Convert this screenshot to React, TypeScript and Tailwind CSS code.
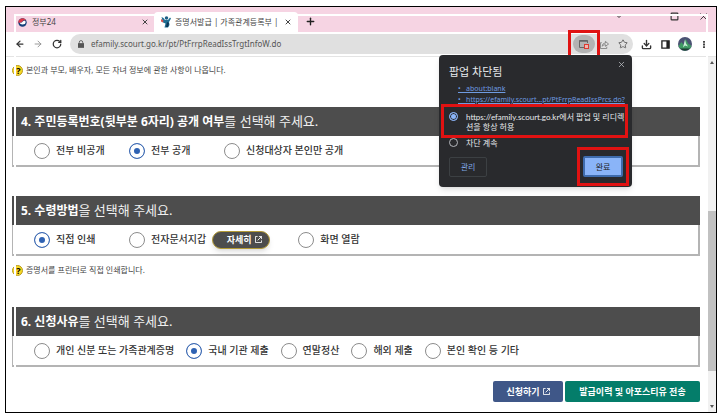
import React, { useState } from "react";
import {
  ArrowLeft,
  ArrowRight,
  ChevronDown,
  Download,
  Plus,
  RotateCw,
  Square,
  Star,
  X,
} from "lucide-react";

const GovLogo = () => (
  <svg viewBox="0 0 16 16" className="size-[9px] shrink-0" aria-hidden="true">
    <circle cx="8" cy="8" r="7.500" fill="#163f7a" />
    <path d="M.5 8a7.500 7.500 0 0 1 14-3.500C12 3 9 4 8 6S3 9.500.5 8z" fill="#d8374a" />
    <path d="M3 8.500C6 9 7.500 7 8.500 6S13 4 13.500 7 11 11.500 8 11.500 3.500 10 3 8.500z" fill="#fff" />
  </svg>
);

const CourtLogo = () => (
  <svg viewBox="0 0 20 24" className="h-[12px] w-[10px] shrink-0" aria-hidden="true">
    <circle cx="11" cy="4" r="3.500" fill="#1d5f86" />
    <path d="M1 2l4 2 3 4h6l4-5 2 2-4 7 1 6-3 5H7l2-8-5-2z" fill="#1f6f93" />
    <path d="M0 6l5 3-1 4-4-2z" fill="#d9534f" />
    <path d="M12 12l4 2-2 8h-4z" fill="#0c3556" />
  </svg>
);

const Avatar = () => (
  <svg viewBox="0 0 14 14" className="size-[14px]" aria-hidden="true">
    <circle cx="7" cy="7" r="7" fill="#4b5273" />
    <path d="M0.500 9l3-4 2 3 2-6 3 5 2 1 .8 1.500A7 7 0 0 1 1 10z" fill="#3f9a63" />
    <path d="M7 2.500l1 4 2 3-3-1-2 2 1-4z" fill="#c9efd6" />
    <path d="M2 11.500h10A7 7 0 0 1 2 11.500z" fill="#1f3d35" />
  </svg>
);

const LockIcon = () => (
  <svg viewBox="0 0 7 9" className="h-[8px] w-[6px] shrink-0" aria-hidden="true">
    <path d="M1.500 4V2.500a2 2 0 0 1 4 0V4" fill="none" stroke="#555" />
    <path d="M0 3.500h7V9H0z" fill="#555" />
  </svg>
);

const ShareIcon = () => (
  <svg viewBox="0 0 10 10" className="size-[9px] shrink-0" fill="none" stroke="#808080" aria-hidden="true">
    <path d="M2 3H.5v6.500h7V7.500" />
    <path d="M2.500 7C2.500 4.500 4 3.500 6 3.500V1.500L9.500 4.500 6 7V5.200C4.500 5.200 3.500 5.500 2.500 7z" />
  </svg>
);

const NewWindowIcon = () => (
  <svg viewBox="0 0 8 8" className="size-[7px] shrink-0" fill="none" stroke="currentColor" aria-hidden="true">
    <path d="M3 .5H.5v7h7V5" />
    <path d="M4.500.5h3v3M7.500.5L3 5" />
  </svg>
);

const HelpNote = ({ children }: { children: React.ReactNode }) => (
  <p className="flex h-[14px] items-center gap-[3px] text-[8px] whitespace-nowrap text-[#444]">
    <span className="flex size-[11px] shrink-0 items-center justify-center rounded-full border border-[#b89a20] bg-[#f8d824] pl-[2px] text-[9px] leading-none font-bold text-black">
      ?
    </span>
    {children}
  </p>
);

type SectionProps = {
  title: string;
  rest: string;
  children: React.ReactNode;
};

const Section = ({ title, rest, children }: SectionProps) => (
  <fieldset className="min-w-0">
    <legend className="flex h-[29px] w-full items-center bg-[#4d4d4d] pl-[9px] text-[13px] whitespace-nowrap text-[#f0f0f0]">
      <b className="text-[12px] text-white">{title}</b>
      {rest}
    </legend>
    <div className="flex h-[31px] items-center border-r-2 border-b-2 border-l border-[#b4b4b4] pl-[21px]">
      {children}
    </div>
  </fieldset>
);

type OptionProps = {
  name: string;
  label: string;
  value: string;
  onChange: (value: string) => void;
  className?: string;
};

const Option = ({ name, label, value, onChange, className = "" }: OptionProps) => (
  <label
    className={`flex shrink-0 items-center gap-[6px] text-[10px] font-medium whitespace-nowrap text-[#333] ${className}`}
  >
    <input
      type="radio"
      name={name}
      checked={value === label}
      onChange={() => onChange(label)}
      className="size-[16px] shrink-0 appearance-none rounded-full border border-[#8c8c8c] bg-white checked:border-[#3f6bb3] checked:bg-[#2f62b3] checked:shadow-[inset_0_0_0_4px_white]"
    />
    {label}
  </label>
);

const popupRadio =
  "size-[9px] shrink-0 appearance-none rounded-full border border-[#b5b8bd] checked:border-[#8ab4f8] checked:bg-[#8ab4f8] checked:shadow-[inset_0_0_0_1px_#292a2d]";

const PopupBlocked = () => {
  const [allow, setAllow] = useState(true);

  return (
    <div className="absolute top-[23px] right-[84px] z-20 h-[132px] w-[193px] rounded-[4px] bg-[#292a2d] font-[Lato,'Noto_Sans_CJK_KR',sans-serif] text-[#e8eaed] shadow-md">
      <button aria-label="닫기" className="absolute top-[5px] right-[6px] text-[#bdc1c6]">
        <X size={9} />
      </button>
      <h2 className="pt-[9px] pl-[10px] text-[11px] leading-[16px]">팝업 차단됨</h2>
      <ul className="pt-[3px] pl-[19px] font-['Noto_Sans',sans-serif] text-[7px] leading-[11px] whitespace-nowrap text-[#6f9be0] underline">
        <li>
          <a href="#blank">•&nbsp;&nbsp; about:blank</a>
        </li>
        <li>
          <a href="#prcs">•&nbsp;&nbsp; https://efamily.scourt...pt/PtFrrpReadIssPrcs.do?</a>
        </li>
      </ul>

      {/* Always allow */}
      <div className="mt-[-1px] ml-[2px] h-[34px] w-[187px] border-3 border-[#e01212] pt-[5px] pl-[5px]">
        <label className="flex gap-[8px] text-[8px] leading-[10px]">
          <input
            type="radio"
            name="popup"
            checked={allow}
            onChange={() => setAllow(true)}
            className={popupRadio}
          />
          <span className="whitespace-nowrap">
            https://efamily.scourt.go.kr에서 팝업 및 리디렉
            <br />
            션을 항상 허용
          </span>
        </label>
      </div>
      <label className="ml-[10px] flex h-[9px] items-center gap-[8px] text-[8px]">
        <input
          type="radio"
          name="popup"
          checked={!allow}
          onChange={() => setAllow(false)}
          className={popupRadio}
        />
        차단 계속
      </label>

      <div className="flex items-center justify-between pr-[3px] pl-[10px]">
        <button className="h-[20px] w-[38px] rounded-[2px] border border-[#3c4043] text-[8px] text-[#7fa6e6]">
          관리
        </button>
        <div className="flex border-3 border-[#e01212] px-[3px] py-[6px]">
          <button className="h-[21px] w-[40px] rounded-[2px] border-2 border-[#3f6cad] bg-[#8ab4f8] text-[8px] leading-[12px] text-[#202124]">
            완료
          </button>
        </div>
      </div>
    </div>
  );
};

const App = () => {
  const [open, setOpen] = useState("전부 공개");
  const [method, setMethod] = useState("직접 인쇄");
  const [reason, setReason] = useState("국내 기관 제출");

  return (
    <div className="bg-white pt-[6px] pr-[5px] pb-[6px] pl-[5px] font-['Noto_Sans','Noto_Sans_CJK_KR',sans-serif]">
      <div className="relative border border-black">
        {/* Inner outline */}
        <div className="pointer-events-none absolute inset-x-[8px] top-[7px] bottom-0 z-10 border-x-2 border-t-2 border-white" />

        {/* Tabs */}
        <header className="flex h-[25px] items-end bg-[#f6d4e3] text-[8px] whitespace-nowrap text-[#444]">
          <div className="flex h-[20px] w-[148px] items-center gap-[5px] pr-[5px] pl-[12px]">
            <GovLogo />
            <span className="grow">정부24</span>
            <X size={8} strokeWidth={3} />
          </div>
          <div className="flex h-[20px] w-[144px] items-center gap-[4px] rounded-t-[4px] bg-white pr-[6px] pl-[7px]">
            <CourtLogo />
            <span className="grow">증명서발급 | 가족관계등록부 |</span>
            <X size={8} strokeWidth={3} className="shrink-0" />
          </div>
          <button aria-label="새 탭" className="mb-[5px] ml-[7px] text-[#222]">
            <Plus size={11} strokeWidth={3} />
          </button>
          <div className="ml-auto flex items-center gap-[19px] self-start pt-[3px] pr-[7px] text-[#333]">
            <ChevronDown size={12} className="mr-[26px]" />
            <Square size={9} strokeWidth={3} />
            <X size={11} />
          </div>
        </header>

        {/* Toolbar */}
        <div className="relative flex h-[25px] items-center border-b border-[#e4e4e4] pr-[11px] pl-[9px] text-[#333]">
          <ArrowLeft size={10} strokeWidth={3} />
          <ArrowRight size={10} className="ml-[8px] text-[#888]" />
          <RotateCw size={10} strokeWidth={3} className="ml-[9px]" />
          <div className="ml-[8px] flex h-[20px] min-w-0 grow items-center rounded-full bg-[#e0e0e0] pr-[5px] pl-[8px]">
            <LockIcon />
            <input
              aria-label="주소"
              defaultValue="efamily.scourt.go.kr/pt/PtFrrpReadIssTrgtInfoW.do"
              className="ml-[7px] min-w-0 grow bg-transparent text-[8px] text-[#555] outline-none"
            />
            <div className="z-20 -my-[4px] flex h-[28px] w-[32px] shrink-0 items-center justify-center border-3 border-[#e01212]">
              <button
                aria-label="팝업 차단됨"
                className="flex h-[18px] w-[22px] items-center justify-center rounded-full bg-[#b3b3b3]"
              >
                <svg viewBox="0 0 10 9" className="h-[9px] w-[10px]">
                  <path d="M5 7.500H.5v-7h8V3" fill="none" stroke="#666" />
                  <path d="M.5 1h8" stroke="#666" strokeWidth="1.500" />
                  <rect x="5.500" y="4.500" width="4" height="4" fill="#f3b5b0" stroke="#dd3b30" />
                </svg>
              </button>
            </div>
            <ShareIcon />
            <Star size={10} className="ml-[9px] shrink-0 text-[#555]" />
          </div>
          <Download size={11} strokeWidth={3} className="ml-[8px]" />
          <svg viewBox="0 0 10 10" className="ml-[9px] size-[9px]">
            <path d="M1 1h8v8H1z" fill="none" stroke="#222" strokeWidth="1.500" />
            <path d="M6 1h3v8H6z" fill="#222" />
          </svg>
          <div className="ml-[8px]">
            <Avatar />
          </div>
          <svg viewBox="0 0 2 10" className="ml-[11px] h-[9px] w-[2px]" fill="#333">
            <path d="M0 1h2v2H0zM0 4h2v2H0zM0 7h2v2H0z" />
          </svg>
          <PopupBlocked />
        </div>

        <div className="flex">
          <main className="min-w-0 grow pt-[6px] pr-[8px] pb-[10px] pl-[6px]">
            <HelpNote>본인과 부모, 배우자, 모든 자녀 정보에 관한 사항이 나옵니다.</HelpNote>

            <div className="mt-[30px]">
              <Section title="4. 주민등록번호(뒷부분 6자리) 공개 여부" rest="를 선택해 주세요.">
                <Option name="open" label="전부 비공개" value={open} onChange={setOpen} className="w-[95px]" />
                <Option name="open" label="전부 공개" value={open} onChange={setOpen} className="w-[95px]" />
                <Option name="open" label="신청대상자 본인만 공개" value={open} onChange={setOpen} />
              </Section>
            </div>

            <div className="mt-[29px] mb-[7px]">
              <Section title="5. 수령방법" rest="을 선택해 주세요.">
                <Option name="method" label="직접 인쇄" value={method} onChange={setMethod} className="w-[95px]" />
                <Option name="method" label="전자문서지갑" value={method} onChange={setMethod} />
                <button className="mr-[28px] ml-[6px] flex h-[18px] w-[58px] items-center justify-center gap-[3px] rounded-full border border-[#b39a35] bg-[#4d4d4d] pl-[6px] text-[9px] font-bold text-white shadow-md">
                  자세히
                  <NewWindowIcon />
                </button>
                <Option name="method" label="화면 열람" value={method} onChange={setMethod} />
              </Section>
            </div>
            <HelpNote>증명서를 프린터로 직접 인쇄합니다.</HelpNote>

            <div className="mt-[30px]">
              <Section title="6. 신청사유" rest="를 선택해 주세요.">
                <div className="flex gap-[12px]">
                  {["개인 신분 또는 가족관계증명", "국내 기관 제출", "연말정산", "해외 제출", "본인 확인 등 기타"].map(
                    (label) => (
                      <Option key={label} name="reason" label={label} value={reason} onChange={setReason} />
                    )
                  )}
                </div>
              </Section>
            </div>

            {/* Submit */}
            <div className="mt-[14px] flex justify-end gap-[2px] text-[9px] font-bold text-white">
              <button className="flex h-[21px] w-[70px] items-center justify-center gap-[3px] rounded-[2px] bg-[#3f5788]">
                신청하기
                <NewWindowIcon />
              </button>
              <button className="h-[21px] w-[135px] rounded-[2px] bg-[#047d6a]">
                발급이력 및 아포스티유 전송
              </button>
            </div>
          </main>

          {/* Scrollbar */}
          <div className="flex w-[8px] shrink-0 flex-col items-center bg-[#f1f1f1] py-[4px]">
            <svg viewBox="0 0 4 3" className="h-[3px] w-[4px]" fill="#555">
              <path d="M2 0l2 3H0z" />
            </svg>
            <div className="grow-[146]" />
            <div className="w-full grow-[158] bg-[#c1c1c1]" />
            <div className="grow-[34]" />
            <svg viewBox="0 0 4 3" className="h-[3px] w-[4px]" fill="#555">
              <path d="M0 0h4L2 3z" />
            </svg>
          </div>
        </div>
      </div>
    </div>
  );
};

export default App;
